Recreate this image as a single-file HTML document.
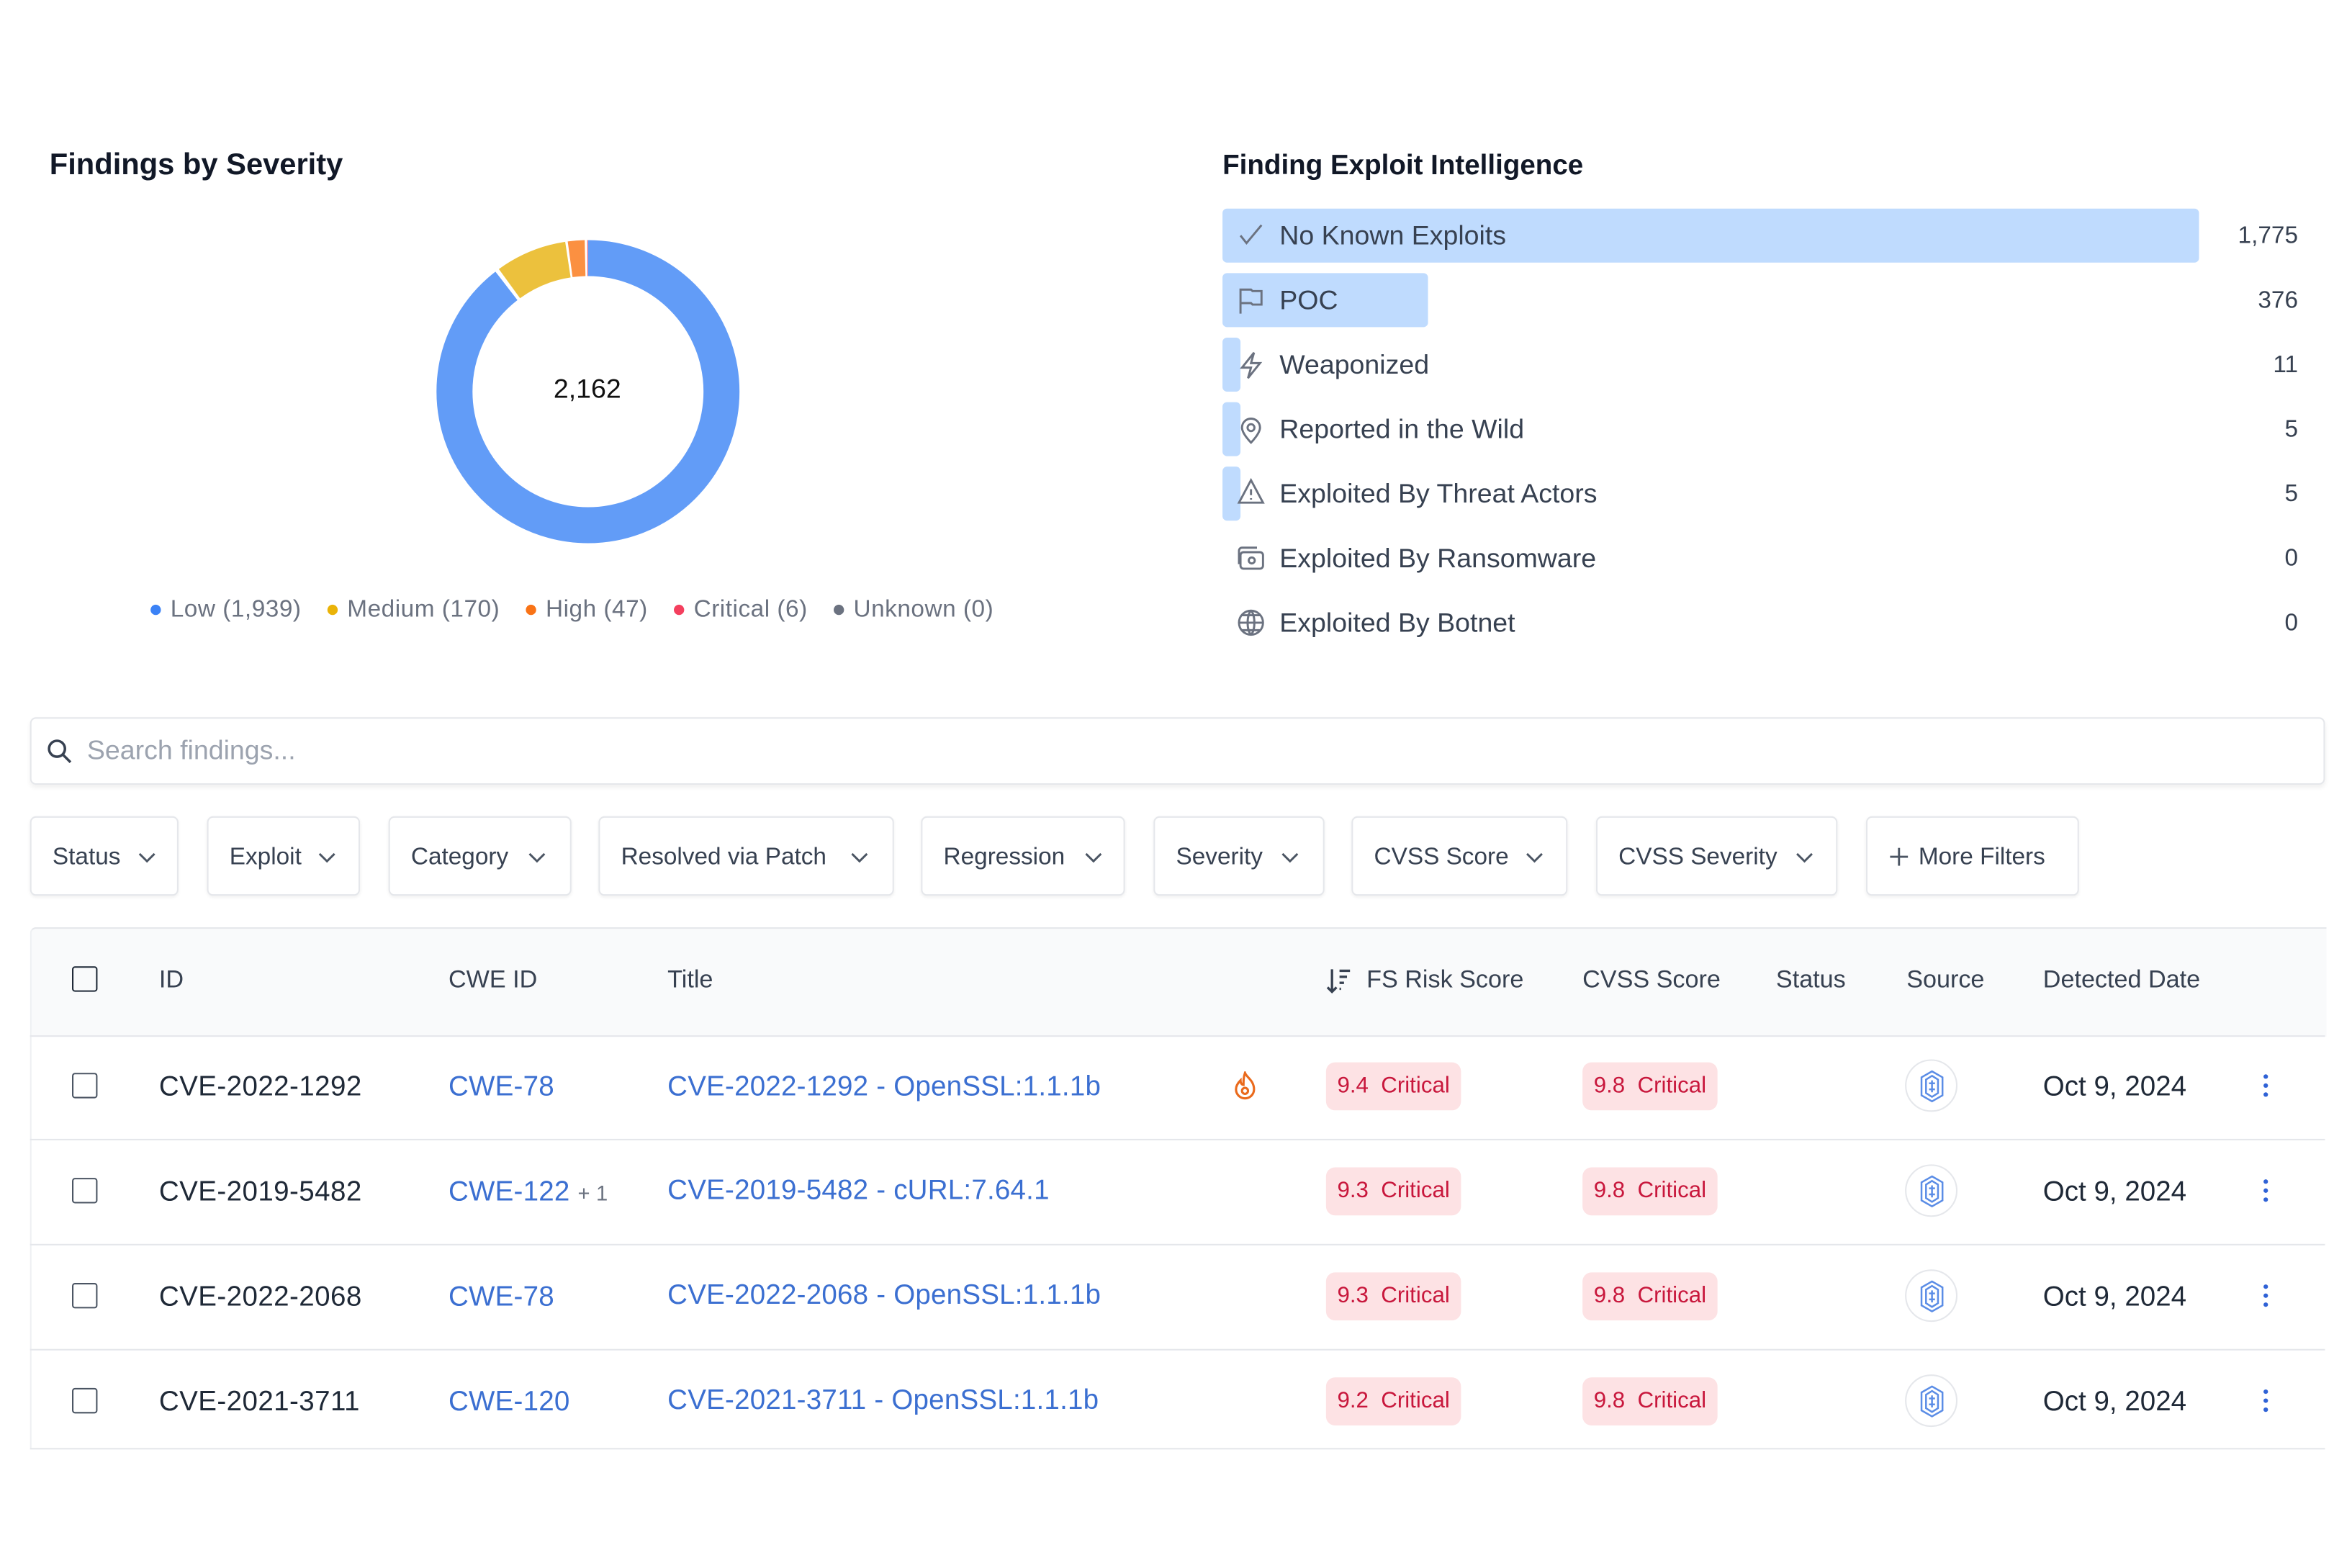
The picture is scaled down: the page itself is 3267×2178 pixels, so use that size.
<!DOCTYPE html>
<html><head><meta charset="utf-8"><style>
html,body{margin:0;padding:0;background:#fff;width:3267px;height:2178px;overflow:hidden}
#w{position:absolute;left:0;top:0;width:1568px;height:1045px;transform-origin:0 0;transform:scale(2.08355,2.0842);font-family:"Liberation Sans",sans-serif;color:#1f2937}
.a{position:absolute;white-space:nowrap}
h2{position:absolute;margin:0;font-size:20px;font-weight:600;color:#111827}
.bar{position:absolute;left:815px;height:36px;background:#bfdbfe;border-radius:3px}
.lbl{position:absolute;left:853px;font-size:18px;color:#374151;line-height:20px}
.num{position:absolute;right:36px;font-size:16px;color:#374151;line-height:20px;text-align:right}
.ic{position:absolute;left:824px;width:20px;height:20px}
.btn{position:absolute;top:544px;height:53px;border:1px solid #e5e7eb;border-radius:4px;box-shadow:0 1px 2px rgba(0,0,0,.06);font-size:16px;color:#374151;line-height:53px;box-sizing:border-box;padding-left:14px}
.btn svg{position:absolute;top:21px}
.row{position:absolute;left:20px;width:1530px;border-top:1px solid #e5e7eb}
.cb{position:absolute;left:48px;width:15px;height:15px;border:1.6px solid #4b5563;border-radius:2px}
.id{position:absolute;left:106px;font-size:18.5px;color:#1f2937;letter-spacing:.2px}
.lk{position:absolute;font-size:18.5px;color:#3b6fd1;letter-spacing:.1px}
.bd{position:absolute;width:90px;height:32px;background:#fde2e4;border-radius:6px;color:#c8173c;font-size:15px;line-height:32px;text-align:center}
.th{position:absolute;top:644px;font-size:16.4px;color:#374151}
.src{position:absolute;left:1270px;width:35px;height:35px;border-radius:50%;border:1.5px solid #e5e7eb;box-sizing:border-box}
.dt{position:absolute;left:1362px;font-size:18.5px;color:#1f2937}
.dots{position:absolute;left:1509px;width:4px}
.dots i{display:block;width:3px;height:3px;background:#2f62d6;border-radius:50%;margin-bottom:3px}
.lg span.g{display:inline-block;width:16px}
</style></head><body><div id="w">
<h2 style="left:33px;top:99px">Findings by Severity</h2>
<svg class="a" style="left:280px;top:149px" width="224" height="224" viewBox="0 0 224 224">
<g transform="translate(112,112) rotate(-90)">
<circle r="89" fill="none" stroke="#629cf7" stroke-width="24" stroke-dasharray="500.5 65" stroke-dashoffset="0"/>
<circle r="89" fill="none" stroke="#ecc13d" stroke-width="24" stroke-dasharray="42.5 600" stroke-dashoffset="-503"/>
<circle r="89" fill="none" stroke="#fb9041" stroke-width="24" stroke-dasharray="10 600" stroke-dashoffset="-547"/>
<circle r="89" fill="none" stroke="#f05a6a" stroke-width="24" stroke-dasharray="1.2 600" stroke-dashoffset="-558.5"/>
</g></svg>
<div class="a" style="left:369px;top:249px;font-size:18px;color:#111">2,162</div>
<div class="a lg" style="left:99px;top:398px;font-size:16px;color:#6b7280;letter-spacing:.25px">
<span style="color:#3b82f6">●</span> Low (1,939)<span class="g"></span><span style="color:#eab308">●</span> Medium (170)<span class="g"></span><span style="color:#f97316">●</span> High (47)<span class="g"></span><span style="color:#f43f5e">●</span> Critical (6)<span class="g"></span><span style="color:#6b7280">●</span> Unknown (0)</div>

<h2 style="left:815px;top:99px;font-size:18.5px">Finding Exploit Intelligence</h2>
<div class="bar" style="top:139px;width:651px"></div>
<div class="bar" style="top:182px;width:137px"></div>
<div class="bar" style="top:225px;width:12px"></div>
<div class="bar" style="top:268px;width:12px"></div>
<div class="bar" style="top:311px;width:12px"></div>
<svg class="ic" style="top:147px" viewBox="0 0 20 20" fill="none" stroke="#6b7280" stroke-width="1.4"><path d="M3 10l4 5L17 3"/></svg>
<svg class="ic" style="top:190px" viewBox="0 0 20 20" fill="none" stroke="#6b7280" stroke-width="1.4"><path d="M3 19V3h7l1 1h6v9h-6l-1-1H3"/></svg>
<svg class="ic" style="top:233px" viewBox="0 0 20 20" fill="none" stroke="#6b7280" stroke-width="1.4"><path d="M12 2L4 12h6l-2 7 8-10h-6z"/></svg>
<svg class="ic" style="top:276px" viewBox="0 0 20 20" fill="none" stroke="#6b7280" stroke-width="1.4"><path d="M10 19s-6-6-6-10a6 6 0 0112 0c0 4-6 10-6 10z"/><circle cx="10" cy="9" r="2.3"/></svg>
<svg class="ic" style="top:318px" viewBox="0 0 20 20" fill="none" stroke="#6b7280" stroke-width="1.4"><path d="M10 2L2 17h16z"/><path d="M10 8v4M10 14v1"/></svg>
<svg class="ic" style="top:362px" viewBox="0 0 20 20" fill="none" stroke="#6b7280" stroke-width="1.4"><rect x="3" y="6" width="15" height="11" rx="2"/><path d="M2 14V5a2 2 0 012-2h10"/><circle cx="10.5" cy="11.5" r="2"/></svg>
<svg class="ic" style="top:405px" viewBox="0 0 20 20" fill="none" stroke="#6b7280" stroke-width="1.4"><circle cx="10" cy="10" r="8"/><path d="M2 10h16M10 2c-3 3-3 13 0 16M10 2c3 3 3 13 0 16M4 5h12M4 15h12"/></svg>
<div class="lbl" style="top:147px">No Known Exploits</div><div class="num" style="top:148px">1,775</div>
<div class="lbl" style="top:190px">POC</div><div class="num" style="top:191px">376</div>
<div class="lbl" style="top:233px">Weaponized</div><div class="num" style="top:234px">11</div>
<div class="lbl" style="top:276px">Reported in the Wild</div><div class="num" style="top:277px">5</div>
<div class="lbl" style="top:319px">Exploited By Threat Actors</div><div class="num" style="top:320px">5</div>
<div class="lbl" style="top:362px">Exploited By Ransomware</div><div class="num" style="top:363px">0</div>
<div class="lbl" style="top:405px">Exploited By Botnet</div><div class="num" style="top:406px">0</div>

<div class="a" style="left:20px;top:478px;width:1530px;height:45px;border:1px solid #e5e7eb;border-radius:4px;box-shadow:0 2px 3px rgba(0,0,0,.06);box-sizing:border-box"></div>
<svg class="a" style="left:31px;top:492px" width="17" height="17" viewBox="0 0 17 17" fill="none" stroke="#374151" stroke-width="1.7"><circle cx="7" cy="7" r="5.3"/><path d="M11 11l5 5"/></svg>
<div class="a" style="left:58px;top:490px;font-size:18px;color:#9ca3af">Search findings...</div>

<div class="btn" style="left:20px;width:99px">Status<svg style="left:71px" width="12" height="10" viewBox="0 0 12 10" fill="none" stroke="#4b5563" stroke-width="1.4"><path d="M1 3l5 5 5-5"/></svg></div>
<div class="btn" style="left:138px;width:102px">Exploit<svg style="left:73px" width="12" height="10" viewBox="0 0 12 10" fill="none" stroke="#4b5563" stroke-width="1.4"><path d="M1 3l5 5 5-5"/></svg></div>
<div class="btn" style="left:259px;width:122px">Category<svg style="left:92px" width="12" height="10" viewBox="0 0 12 10" fill="none" stroke="#4b5563" stroke-width="1.4"><path d="M1 3l5 5 5-5"/></svg></div>
<div class="btn" style="left:399px;width:197px">Resolved via Patch<svg style="left:167px" width="12" height="10" viewBox="0 0 12 10" fill="none" stroke="#4b5563" stroke-width="1.4"><path d="M1 3l5 5 5-5"/></svg></div>
<div class="btn" style="left:614px;width:136px">Regression<svg style="left:108px" width="12" height="10" viewBox="0 0 12 10" fill="none" stroke="#4b5563" stroke-width="1.4"><path d="M1 3l5 5 5-5"/></svg></div>
<div class="btn" style="left:769px;width:114px">Severity<svg style="left:84px" width="12" height="10" viewBox="0 0 12 10" fill="none" stroke="#4b5563" stroke-width="1.4"><path d="M1 3l5 5 5-5"/></svg></div>
<div class="btn" style="left:901px;width:144px">CVSS Score<svg style="left:115px" width="12" height="10" viewBox="0 0 12 10" fill="none" stroke="#4b5563" stroke-width="1.4"><path d="M1 3l5 5 5-5"/></svg></div>
<div class="btn" style="left:1064px;width:161px">CVSS Severity<svg style="left:132px" width="12" height="10" viewBox="0 0 12 10" fill="none" stroke="#4b5563" stroke-width="1.4"><path d="M1 3l5 5 5-5"/></svg></div>
<div class="btn" style="left:1244px;width:142px;padding-left:34px">More Filters<svg style="left:15px;top:20px" width="12" height="12" viewBox="0 0 12 12" fill="none" stroke="#4b5563" stroke-width="1.4"><path d="M6 0v12M0 6h12"/></svg></div>

<div class="a" style="left:20px;top:618px;width:1530px;height:72px;background:#f9fafb;border-top:1px solid #e5e7eb;border-left:1px solid #eef0f3;border-radius:4px 0 0 0"></div>
<div class="a" style="left:20px;top:690px;width:1px;height:275px;background:#eef0f3"></div>
<div class="cb" style="top:644px;border-color:#1f2937"></div>
<div class="th" style="left:106px">ID</div>
<div class="th" style="left:299px">CWE ID</div>
<div class="th" style="left:445px">Title</div>
<svg class="a" style="left:884px;top:645px" width="18" height="18" viewBox="0 0 18 18" fill="none" stroke="#374151" stroke-width="1.6"><path d="M4 1v15M1 13l3 3 3-3M9 2h7M9 6h5M9 10h3M9 14h1"/></svg>
<div class="th" style="left:911px">FS Risk Score</div>
<div class="th" style="left:1055px">CVSS Score</div>
<div class="th" style="left:1184px">Status</div>
<div class="th" style="left:1271px">Source</div>
<div class="th" style="left:1362px">Detected Date</div>

<div class="row" style="top:690px;height:69px"></div>
<div class="row" style="top:759px;height:70px"></div>
<div class="row" style="top:829px;height:70px"></div>
<div class="row" style="top:899px;height:65px;border-bottom:1px solid #e5e7eb"></div>

<div class="cb" style="top:715px"></div>
<div class="id" style="top:713px">CVE-2022-1292</div>
<div class="lk" style="left:299px;top:713px">CWE-78</div>
<div class="lk" style="left:445px;top:713px">CVE-2022-1292 - OpenSSL:1.1.1b</div>
<svg class="a" style="left:821px;top:714px" width="18" height="20" viewBox="0 0 18 20" fill="none" stroke="#ea6a1c" stroke-width="1.5"><path d="M9 1c1 3 6 5 6 11a6 6 0 01-12 0c0-3 2-5 3-6 0 2 1 3 2 3 0-3 0-5 1-8z"/><circle cx="9" cy="13" r="2"/></svg>
<div class="bd" style="left:884px;top:708px">9.4&nbsp; Critical</div>
<div class="bd" style="left:1055px;top:708px">9.8&nbsp; Critical</div>
<div class="cb" style="top:785px"></div>
<div class="id" style="top:783px">CVE-2019-5482</div>
<div class="lk" style="left:299px;top:783px">CWE-122 <span style="font-size:14px;color:#6b7280">+ 1</span></div>
<div class="lk" style="left:445px;top:782px">CVE-2019-5482 - cURL:7.64.1</div>
<div class="bd" style="left:884px;top:778px">9.3&nbsp; Critical</div>
<div class="bd" style="left:1055px;top:778px">9.8&nbsp; Critical</div>
<div class="cb" style="top:855px"></div>
<div class="id" style="top:853px">CVE-2022-2068</div>
<div class="lk" style="left:299px;top:853px">CWE-78</div>
<div class="lk" style="left:445px;top:852px">CVE-2022-2068 - OpenSSL:1.1.1b</div>
<div class="bd" style="left:884px;top:848px">9.3&nbsp; Critical</div>
<div class="bd" style="left:1055px;top:848px">9.8&nbsp; Critical</div>
<div class="cb" style="top:925px"></div>
<div class="id" style="top:923px">CVE-2021-3711</div>
<div class="lk" style="left:299px;top:923px">CWE-120</div>
<div class="lk" style="left:445px;top:922px">CVE-2021-3711 - OpenSSL:1.1.1b</div>
<div class="bd" style="left:884px;top:918px">9.2&nbsp; Critical</div>
<div class="bd" style="left:1055px;top:918px">9.8&nbsp; Critical</div>

<div class="src" style="top:706px"></div><div class="src" style="top:776px"></div><div class="src" style="top:846px"></div><div class="src" style="top:916px"></div>
<svg class="a" style="left:1279px;top:713px" width="18" height="22" viewBox="0 0 18 22" fill="none" stroke="#5b8de6" stroke-width="1.2"><path d="M9 1l7 4v12l-7 4-7-4V5z"/><path d="M9 4l4 2.5v9L9 18l-4-2.5v-9zM9 7v8M7 9h4M7 13h4"/></svg>
<svg class="a" style="left:1279px;top:783px" width="18" height="22" viewBox="0 0 18 22" fill="none" stroke="#5b8de6" stroke-width="1.2"><path d="M9 1l7 4v12l-7 4-7-4V5z"/><path d="M9 4l4 2.5v9L9 18l-4-2.5v-9zM9 7v8M7 9h4M7 13h4"/></svg>
<svg class="a" style="left:1279px;top:853px" width="18" height="22" viewBox="0 0 18 22" fill="none" stroke="#5b8de6" stroke-width="1.2"><path d="M9 1l7 4v12l-7 4-7-4V5z"/><path d="M9 4l4 2.5v9L9 18l-4-2.5v-9zM9 7v8M7 9h4M7 13h4"/></svg>
<svg class="a" style="left:1279px;top:923px" width="18" height="22" viewBox="0 0 18 22" fill="none" stroke="#5b8de6" stroke-width="1.2"><path d="M9 1l7 4v12l-7 4-7-4V5z"/><path d="M9 4l4 2.5v9L9 18l-4-2.5v-9zM9 7v8M7 9h4M7 13h4"/></svg>
<div class="dt" style="top:713px">Oct 9, 2024</div>
<div class="dt" style="top:783px">Oct 9, 2024</div>
<div class="dt" style="top:853px">Oct 9, 2024</div>
<div class="dt" style="top:923px">Oct 9, 2024</div>
<div class="dots" style="top:716px"><i></i><i></i><i></i></div>
<div class="dots" style="top:786px"><i></i><i></i><i></i></div>
<div class="dots" style="top:856px"><i></i><i></i><i></i></div>
<div class="dots" style="top:926px"><i></i><i></i><i></i></div>
</div></body></html>
